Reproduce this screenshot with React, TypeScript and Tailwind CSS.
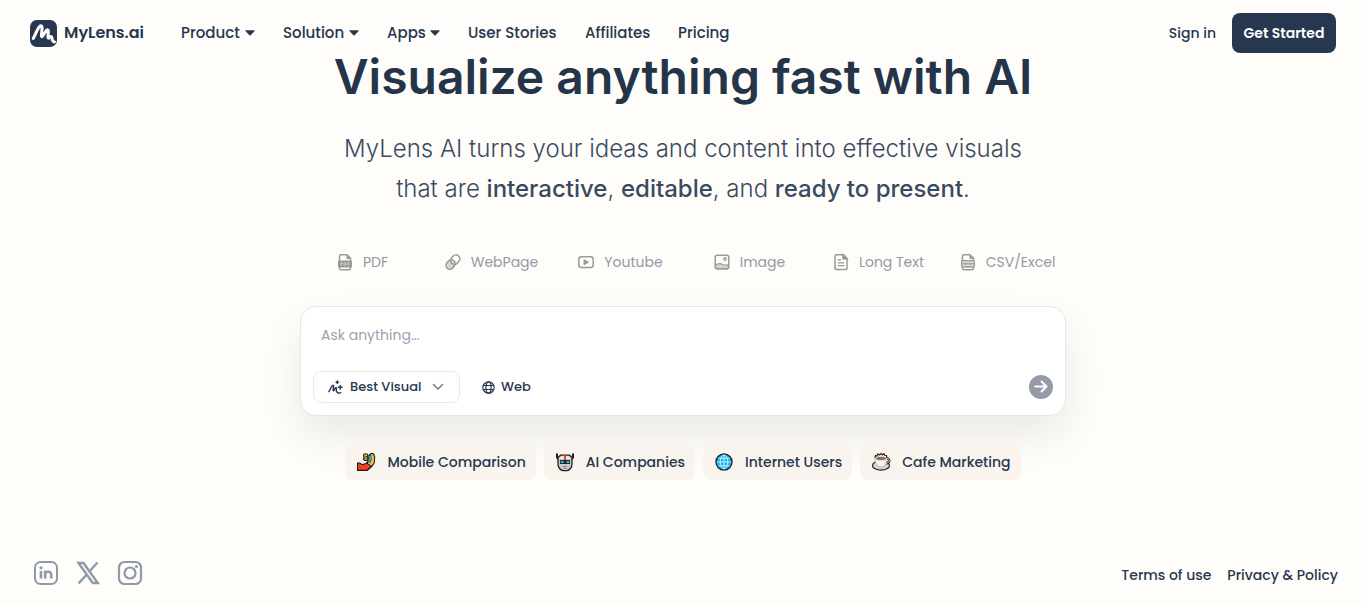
import React from 'react';

const navItems = [
    { label: 'Product', menu: true, width: 'w-[74px]' },
    { label: 'Solution', menu: true, width: 'w-[76px]' },
    { label: 'Apps', menu: true, width: 'w-[53px]' },
    { label: 'User Stories', menu: false, width: 'w-[89px]' },
    { label: 'Affiliates', menu: false, width: 'w-[65px]' },
    { label: 'Pricing', menu: false, width: 'w-[52px]' }
];

const sources = [
    { label: 'PDF', icon: <PdfIcon /> },
    { label: 'WebPage', icon: <LinkIcon /> },
    { label: 'Youtube', icon: <VideoIcon /> },
    { label: 'Image', icon: <ImageIcon /> },
    { label: 'Long Text', icon: <TextIcon /> },
    { label: 'CSV/Excel', icon: <SheetIcon /> }
];

const examples = [
    { label: 'Mobile Comparison', icon: <SelfieIcon /> },
    { label: 'AI Companies', icon: <RobotIcon /> },
    { label: 'Internet Users', icon: <EarthIcon /> },
    { label: 'Cafe Marketing', icon: <CoffeeIcon /> }
];

function Logo() {
    return (
        <svg width="27" height="27" viewBox="0 0 27 27" fill="none" aria-hidden="true">
            <rect width="27" height="27" rx="7" fill="#26374f" />
            <path
                d="M3.200 18.500C5 15.500 7 9.500 9.600 6.600c1.200-1.300 2.700-.7 2.500 1.100l-.7 7.600c-.2 1.700.6 1.900 1.500.5l3-4.800c1.100-1.800 2.700-1.300 2.500.6l-.5 5.200c-.1 1.500.7 1.700 1.500.7 1.300-1.600 2.600-.9 2.700 1.200.1 2 .8 2.900 2.400 3.300"
                stroke="#fffdfa"
                strokeWidth="3"
                strokeLinecap="round"
                strokeLinejoin="round"
            />
        </svg>
    );
}

function PdfIcon() {
    return (
        <svg width="16" height="18" viewBox="0 0 16 18" fill="none" aria-hidden="true">
            <path d="M2.500 8V3.200c0-.9.700-1.500 1.500-1.500h6L13.500 5v3M2.500 14v1.300c0 .8.600 1.400 1.500 1.400h8c.9 0 1.500-.6 1.500-1.400V14" stroke="#9a9a99" strokeWidth="1.500" />
            <path d="M9.500 1.500V6h4.200z" fill="#9a9a99" />
            <rect x="1" y="7.500" width="14" height="7" rx="1" fill="#9a9a99" />
            <path d="M4 12.500V9.700h1c1.100 0 1.100 1.600 0 1.600H4M7.200 9.700v2.600h.6c1.400 0 1.400-2.600 0-2.600zM10.800 12.500V9.700h1.700M10.800 11.200h1.400" stroke="#e0e0de" strokeWidth=".6" />
        </svg>
    );
}

function LinkIcon() {
    return (
        <svg width="16" height="18" viewBox="0 0 16 18" fill="none" stroke="#9a9a99" strokeWidth="1.500" aria-hidden="true">
            <rect x=".6" y="7.600" width="10" height="7.800" rx="3.900" transform="rotate(-50 5.600 11.500)" fill="#d4d4d3" />
            <rect x="5.200" y="2.700" width="10" height="7.800" rx="3.900" transform="rotate(-50 10.200 6.600)" />
        </svg>
    );
}

function VideoIcon() {
    return (
        <svg width="16" height="18" viewBox="0 0 16 18" fill="none" aria-hidden="true">
            <rect x=".8" y="3.800" width="14.400" height="10.700" rx="2.500" stroke="#9a9a99" strokeWidth="1.500" />
            <path d="M6 6.700v5L10.500 9.200z" fill="#9a9a99" stroke="#9a9a99" strokeLinejoin="round" />
        </svg>
    );
}

function ImageIcon() {
    return (
        <svg width="16" height="18" viewBox="0 0 16 18" fill="none" aria-hidden="true">
            <path d="M1.500 12.300c3-2.600 5-2 7.300-.8 2 1.100 3.500.7 5.700.2v2.800c0 .8-.5 1.300-1.300 1.300H3c-.9 0-1.500-.6-1.500-1.300z" fill="#d4d4d3" stroke="#9a9a99" strokeWidth="1.200" />
            <rect x="1.200" y="2.200" width="13.600" height="13.600" rx="2" stroke="#9a9a99" strokeWidth="1.500" />
            <circle cx="11" cy="6" r="1.500" fill="#d4d4d3" stroke="#9a9a99" />
        </svg>
    );
}

function TextIcon() {
    return (
        <svg width="16" height="18" viewBox="0 0 16 18" fill="none" stroke="#9a9a99" strokeWidth="1.500" aria-hidden="true">
            <path d="M3.500 1.800h7L14 5.300v9.400c0 1.100-.7 1.800-1.800 1.800H3.800c-1.100 0-1.800-.7-1.800-1.800V3.500c0-1 .6-1.700 1.500-1.700z" />
            <path d="M10 1.800V5.700h4z" fill="#9a9a99" />
            <path d="M4.800 7h3M4.800 9.800h6.500M4.800 12.600h6.500" strokeWidth="1.300" />
        </svg>
    );
}

function SheetIcon() {
    return (
        <svg width="16" height="18" viewBox="0 0 16 18" fill="none" aria-hidden="true">
            <path d="M2.500 8V3.200c0-.9.700-1.500 1.500-1.500h6L13.500 5v3M2.500 13v2.300c0 .8.600 1.400 1.500 1.400h8c.9 0 1.500-.6 1.500-1.400V13" stroke="#9a9a99" strokeWidth="1.500" />
            <path d="M9.500 1.500V6h4.200z" fill="#9a9a99" />
            <rect x="1.600" y="7.600" width="12.800" height="6.400" rx="1" fill="#dededc" stroke="#9a9a99" strokeWidth="1.300" />
            <path d="M2 10.800h12" stroke="#9a9a99" strokeWidth="1.200" />
            <path d="M6 8.500v1.600M10 8.500v1.600M6 11.600v1.600M10 11.600v1.600" stroke="#9a9a99" strokeWidth=".6" />
        </svg>
    );
}

function SparkIcon() {
    return (
        <svg width="15" height="15" viewBox="0 0 15 15" fill="none" stroke="#26374f" strokeLinecap="round" strokeLinejoin="round" aria-hidden="true">
            <path d="M.9 11.600C2.200 9.800 3 6.800 4.500 5.500c.8-.6 1.200 0 1.100 1l-.5 3.500c-.1 1 .3 1 .8.300l1.300-2.100c.7-1 1.400-.6 1.200.4-.4 2.100-.1 3.200 1.100 4 .9.600 2.200.6 3.100 0" strokeWidth="1.400" />
            <path d="M9.300 1v2.400M8.100 2.200h2.400M12.200 5.400v3.800M10.300 7.300h3.800" strokeWidth="1.400" />
        </svg>
    );
}

function WebIcon() {
    return (
        <svg width="13" height="13" viewBox="0 0 13 13" fill="none" stroke="currentColor" strokeWidth="1.200" aria-hidden="true">
            <circle cx="6.500" cy="6.500" r="5.700" />
            <ellipse cx="6.500" cy="6.500" rx="2.600" ry="5.700" />
            <path d="M1.300 4.500h10.400M1.300 8.500h10.400" />
        </svg>
    );
}

function SelfieIcon() {
    return (
        <svg width="20" height="20" viewBox="0 0 20 20" aria-hidden="true">
            <path d="M1 10.500h3l2 1.500 4-1 2-3 .5-5L15 .8l3 .7 1.200 3-.4 6.500-2.800 4-4.500 4H1z" fill="#171717" />
            <path d="M2 11.600h1.700L6 13.200l5-1.400 3.500 2.400-3.500 3.600H2z" fill="#ee3f20" />
            <path d="m13.200 5 2-3 2 .5 1 2.500-.4 5.700-2.300 3-3.500-2.200z" fill="#f1bd48" />
            <path d="m12.500 4 2.200-1 .8 4-1.300 3.500-2-.7z" fill="#32a9c4" stroke="#222" strokeWidth=".5" />
            <path d="M8 2h3l1 1.500-1 1.300 1 1.500-1 2.200H8.500L7.300 7l1-1.200L7.500 4z" fill="#e8c52f" stroke="#222" strokeWidth="1.100" />
            <path d="M8.500 4.800h2.700M8.500 6.800h2.300" stroke="#222" strokeWidth=".7" />
        </svg>
    );
}

function RobotIcon() {
    return (
        <svg width="20" height="20" viewBox="0 0 20 20" fill="none" aria-hidden="true">
            <path d="M2 1.500v4l2.500 3M18 1.500v4l-2.500 3" stroke="#1d1d1d" strokeWidth="2" />
            <path d="M5.500 3.200h9L17 5.500v6.800c0 3-2.500 6-5 6.400H8c-2.500-.4-5-3.400-5-6.400V5.500z" fill="#c9c9c9" stroke="#232323" strokeWidth="1.300" />
            <path d="M6 4.500h8l1.500 2.500h-11z" fill="#ededed" />
            <path d="M9 3.500h2V8H9z" fill="#ef432d" />
            <path d="M5 8h10v4H5z" fill="#242424" />
            <path d="M5.800 9h2.700v2H5.800zM11.500 9h2.700v2h-2.700z" fill="#2cbce2" />
            <path d="M8 14.500h4M8.500 16.500h3" stroke="#777" strokeWidth=".9" />
        </svg>
    );
}

function EarthIcon() {
    return (
        <svg width="20" height="20" viewBox="0 0 20 20" fill="none" aria-hidden="true">
            <circle cx="10" cy="10" r="8" fill="#12b5ec" stroke="#202b32" strokeWidth="1.400" />
            <g stroke="#c9f1fd" strokeWidth="1">
                <ellipse cx="10" cy="10" rx="3.800" ry="7" />
                <path d="M10 3v14M3 10h14M4.500 6.300h11M4.500 13.700h11" />
            </g>
        </svg>
    );
}

function CoffeeIcon() {
    return (
        <svg width="20" height="20" viewBox="0 0 20 20" fill="none" aria-hidden="true">
            <ellipse cx="10" cy="13.500" rx="8.500" ry="4.700" fill="#d6d6d6" stroke="#222" strokeWidth="1.200" />
            <path d="M15 6.500c4.500-.5 4.500 4.500-.5 5" stroke="#222" strokeWidth="2.400" />
            <path d="M15 6.500c4.500-.5 4.500 4.500-.5 5" stroke="#ddd" strokeWidth=".9" />
            <path d="M4 6.500c0 5 2 8.500 6 8.500s6-3.500 6-8.500z" fill="#f3f3f3" stroke="#9a9a9a" strokeWidth=".6" />
            <ellipse cx="10" cy="6.500" rx="5.600" ry="2.200" fill="#99684b" stroke="#e8e8e8" />
            <path d="m4 6 .5-2.500L6 4l1-2 1.500 1L10 1.500 11.500 3 13 1.700l.8 1.600 1.700.2.5 2.500" stroke="#252525" strokeWidth="1.200" />
        </svg>
    );
}

function Header() {
    return (
        <header className="flex items-start justify-between px-[30px] pt-[13px]">
            <div className="flex h-10 items-center">
                <a href="#" className="flex w-[115px] items-center gap-[7px] text-base font-semibold whitespace-nowrap">
                    <Logo />
                    MyLens.ai
                </a>
                <nav className="ml-9 flex items-center gap-7 text-[15px] font-medium">
                    {navItems.map((item) =>
                        item.menu ? (
                            <button key={item.label} type="button" className={`flex items-center justify-between whitespace-nowrap ${item.width}`}>
                                {item.label}
                                <svg width="10" height="6" viewBox="0 0 10 6" fill="currentColor" aria-hidden="true">
                                    <path d="M1 .3h8c.6 0 .8.500.4.900L5.600 5.200c-.3.400-.8.400-1.200 0L.6 1.200C.2.800.4.300 1 .3z" />
                                </svg>
                            </button>
                        ) : (
                            <a key={item.label} href="#" className={`whitespace-nowrap ${item.width}`}>
                                {item.label}
                            </a>
                        )
                    )}
                </nav>
            </div>
            <div className="flex items-center gap-4 text-sm">
                <a href="#" className="font-medium">Sign in</a>
                <button type="button" className="h-10 w-[104px] rounded-lg bg-[#26374f] font-semibold whitespace-nowrap text-white">
                    Get Started
                </button>
            </div>
        </header>
    );
}

function PromptBox() {
    return (
        <form className="mt-[29px] flex w-full max-w-[766px] flex-col rounded-2xl border border-[#eee6dc] bg-white px-3 pb-3 shadow-[0_20px_40px_rgba(0,0,0,0.08)]">
            <textarea
                aria-label="Ask anything"
                placeholder="Ask anything..."
                className="h-16 resize-none px-2 pt-[18px] text-sm leading-5 outline-none placeholder:text-[#9ca3af]"
            />
            <div className="flex items-center justify-between text-[13px] font-medium">
                <div className="flex items-center gap-[22px]">
                    <label className="flex h-8 w-[147px] items-center gap-[7px] rounded-lg border border-[#f1e9de] pr-[15px] pl-[14px]">
                        <SparkIcon />
                        <select aria-label="Visual type" className="min-w-0 flex-1 appearance-none bg-transparent outline-none">
                            <option>Best Visual</option>
                        </select>
                        <svg width="12" height="8" viewBox="0 0 12 8" fill="none" stroke="#74808f" strokeWidth="1.600" strokeLinecap="round" strokeLinejoin="round" className="pointer-events-none" aria-hidden="true">
                            <path d="m1.500 1.500 4.500 4.500 4.500-4.500" />
                        </svg>
                    </label>
                    <button type="button" className="flex items-center gap-[6px]">
                        <WebIcon />
                        Web
                    </button>
                </div>
                <button type="submit" aria-label="Send" className="flex size-6 items-center justify-center rounded-full bg-[#949ba7] text-white">
                    <svg width="14" height="14" viewBox="0 0 14 14" fill="none" stroke="currentColor" strokeWidth="2" strokeLinecap="round" strokeLinejoin="round" aria-hidden="true">
                        <path d="M1.200 6.500h11.300M7.500 1.500l5 5-5 5" />
                    </svg>
                </button>
            </div>
        </form>
    );
}

function Footer() {
    return (
        <footer className="mt-auto flex items-center justify-between pr-7 pb-[18px] pl-[33px] text-sm font-medium">
            <div className="flex gap-4 text-[#8f99a9]">
                <a href="#" aria-label="LinkedIn">
                    <svg width="26" height="26" viewBox="0 0 26 26" fill="none" stroke="currentColor" strokeWidth="2">
                        <rect x="2" y="2" width="22" height="22" rx="5.500" />
                        <path d="M8 11v7.500M12.200 18.500v-8M12.200 14.500c0-3.600 6-3.600 6 0v4" strokeWidth="2.600" />
                        <circle cx="8" cy="7.800" r="1.600" fill="currentColor" stroke="none" />
                    </svg>
                </a>
                <a href="#" aria-label="X">
                    <svg width="26" height="26" viewBox="0 0 26 26" fill="none" stroke="currentColor" strokeWidth="2">
                        <path d="M3.500 3h5l14.300 20h-5zM22.500 2.500l-8 8.700M11.500 14.700l-8 8.800" strokeWidth="2.400" />
                    </svg>
                </a>
                <a href="#" aria-label="Instagram">
                    <svg width="26" height="26" viewBox="0 0 26 26" fill="none" stroke="currentColor" strokeWidth="2.200">
                        <rect x="2" y="2" width="22" height="22" rx="5.500" />
                        <circle cx="13" cy="13" r="5.500" />
                        <circle cx="19.500" cy="6.500" r="1.500" fill="currentColor" stroke="none" />
                    </svg>
                </a>
            </div>
            <div className="flex gap-4 pt-1">
                <a href="#">Terms of use</a>
                <a href="#">Privacy &amp; Policy</a>
            </div>
        </footer>
    );
}

export default function App() {
    return (
        <div className="flex min-h-screen flex-col bg-[#fffdfa] font-['Poppins','Inter',sans-serif] text-[#26374f]">
            <Header />
            <main className="flex flex-col items-center">
                <h1 className="text-center font-['Inter',sans-serif] text-5xl leading-12 font-semibold text-[#243449]">
                    Visualize anything fast with AI
                </h1>
                <p className="mt-7 text-center font-['Inter',sans-serif] text-2xl leading-10 font-light text-[#3a4a61]">
                    <span className="block">MyLens AI turns your ideas and content into effective visuals</span>
                    <span className="block">
                        that are <b className="font-medium">interactive</b>, <b className="font-medium">editable</b>, and{' '}
                        <b className="font-medium">ready to present</b>.
                    </span>
                </p>
                <ul className="mt-[38px] grid w-full max-w-[778px] grid-cols-6 pl-1 text-sm text-[#929aa6]">
                    {sources.map((source) => (
                        <li key={source.label} className="flex h-[30px] items-center justify-center gap-[10px] whitespace-nowrap">
                            {source.icon}
                            {source.label}
                        </li>
                    ))}
                </ul>
                <PromptBox />
                <div className="mt-7 flex flex-wrap justify-center gap-2 text-sm font-medium">
                    {examples.map((example) => (
                        <button
                            key={example.label}
                            type="button"
                            className="flex h-9 items-center gap-[11px] rounded-lg bg-[#f9f4ed] pr-[10px] pl-[11px] whitespace-nowrap"
                        >
                            {example.icon}
                            {example.label}
                        </button>
                    ))}
                </div>
            </main>
            <Footer />
        </div>
    );
}
